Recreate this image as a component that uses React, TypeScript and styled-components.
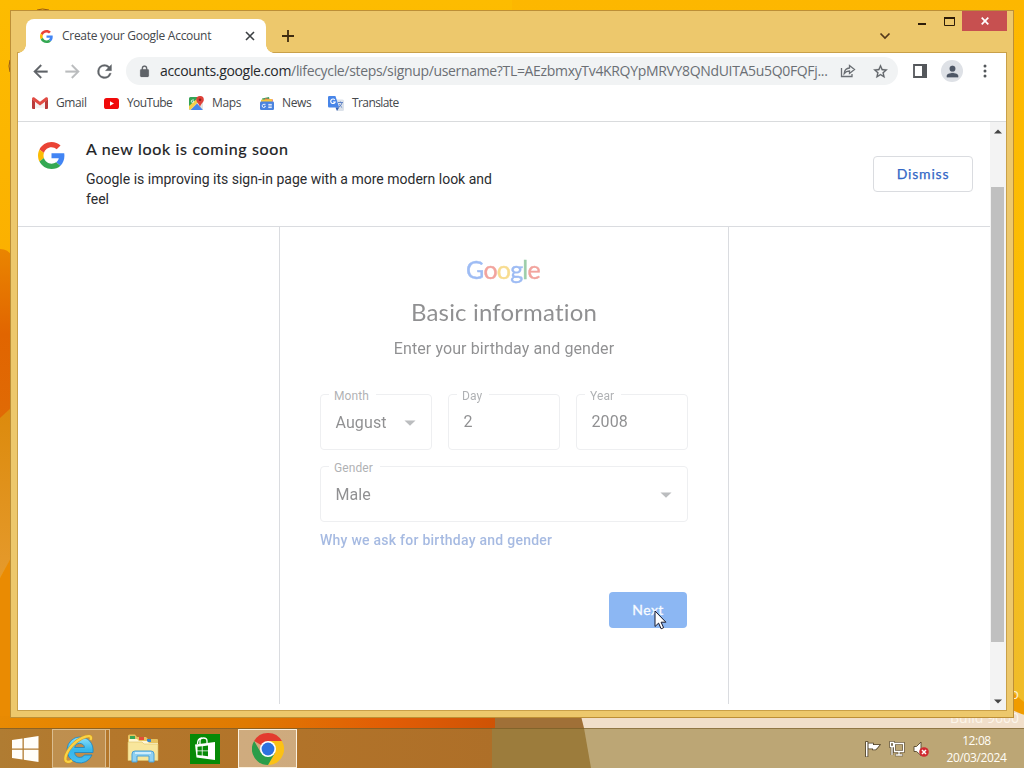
import React from "react";
import styled, { createGlobalStyle } from "styled-components";

const GlobalStyle = createGlobalStyle`
  html, body { margin: 0; padding: 0; }
  body { width: 1024px; height: 768px; overflow: hidden; }
  * { box-sizing: border-box; }
  svg { display: block; flex: none; }
`;

const uiFont = `"Open Sans", "Noto Sans", sans-serif`;

const Desktop = styled.div`
  position: relative;
  display: flex;
  flex-direction: column;
  justify-content: flex-end;
  width: 1024px;
  height: 768px;
  overflow: hidden;
  background: #fcb900;
  font-family: ${uiFont};
`;

const Wallpaper = styled.svg`
  position: absolute;
  inset: 0;
`;

const Watermark = styled.div`
  position: absolute;
  right: 5px;
  top: 685px;
  text-align: right;
  font-size: 14px;
  line-height: 18px;
  color: #fffaf0;
  opacity: 0.85;
`;

const WatermarkLine = styled.div<{ $gap?: number }>`
  height: ${(p) => p.$gap ?? 18}px;
  white-space: nowrap;
`;

const Window = styled.div`
  position: absolute;
  left: 10px;
  top: 10px;
  width: 1004px;
  height: 708px;
  display: flex;
  flex-direction: column;
  padding: 0 7px 7px;
  background: #edc86c;
  border: 1px solid #bd8f36;
`;

const TitleBar = styled.div`
  display: flex;
  height: 42px;
  padding-left: 8px;
  flex: none;
`;

const Tab = styled.div`
  position: relative;
  display: flex;
  align-items: center;
  width: 240px;
  height: 34px;
  margin-top: 8px;
  padding: 0 10px 0 14px;
  background: #fff;
  border-radius: 8px 8px 0 0;
  &::before, &::after {
    content: "";
    position: absolute;
    bottom: 0;
    width: 8px;
    height: 8px;
  }
  &::before { left: -8px; background: radial-gradient(circle at 0 0, transparent 7.5px, #fff 8px); }
  &::after { right: -8px; background: radial-gradient(circle at 100% 0, transparent 7.5px, #fff 8px); }
`;

const TabTitle = styled.span`
  flex: 1;
  margin-left: 9px;
  padding-bottom: 1px;
  font-size: 12px;
  letter-spacing: -0.28px;
  color: #45484c;
  white-space: nowrap;
`;

const NewTab = styled.div`
  display: flex;
  align-items: center;
  height: 34px;
  margin: 8px 0 0 16px;
`;

const TabSearch = styled.div`
  display: flex;
  align-items: center;
  height: 34px;
  margin: 8px 17px 0 auto;
`;

const Controls = styled.div`
  display: flex;
  height: 20px;
  flex: none;
  margin-right: -1px;
`;

const Control = styled.div<{ $width: number; $close?: boolean }>`
  display: flex;
  align-items: center;
  justify-content: center;
  width: ${(p) => p.$width}px;
  height: 20px;
  background: ${(p) => (p.$close ? "#c75050" : "transparent")};
`;

const Browser = styled.div`
  display: flex;
  flex-direction: column;
  flex: 1;
  min-height: 0;
  background: #fff;
  outline: 1px solid #c9a049;
`;

const Toolbar = styled.div`
  display: flex;
  align-items: center;
  height: 36px;
  padding-left: 12px;
  margin-bottom: 1px;
  flex: none;
`;

const ToolButton = styled.div<{ $width: number }>`
  display: flex;
  flex: none;
  align-items: center;
  justify-content: center;
  width: ${(p) => p.$width}px;
`;

const AddressBar = styled.div`
  display: flex;
  flex: none;
  align-items: center;
  width: 772px;
  height: 28px;
  padding-left: 12px;
  border-radius: 14px;
  background: #f1f3f4;
`;

const Url = styled.div`
  flex: 1;
  margin-left: 9px;
  padding-bottom: 1px;
  font-size: 14px;
  letter-spacing: -0.33px;
  color: #6b6f74;
  white-space: nowrap;
  b { font-weight: 400; color: #26282b; }
`;

const Avatar = styled.div`
  display: flex;
  flex: none;
  align-items: center;
  justify-content: center;
  width: 22px;
  height: 22px;
  border-radius: 50%;
  background: #dee1e6;
`;

const Bookmarks = styled.div`
  display: flex;
  align-items: center;
  height: 32px;
  padding: 0 0 5px 14px;
  border-bottom: 1px solid #d9dbdd;
  flex: none;
`;

const Bookmark = styled.div<{ $width: number }>`
  display: flex;
  align-items: center;
  gap: 8px;
  width: ${(p) => p.$width}px;
  height: 26px;
  font-size: 12px;
  letter-spacing: -0.25px;
  color: #45484c;
  white-space: nowrap;
`;

const BookmarkName = styled.span<{ $spacing: number }>`
  padding-bottom: 1px;
  letter-spacing: ${(p) => p.$spacing}px;
`;

const Viewport = styled.div`
  display: flex;
  flex: 1;
  min-height: 0;
`;

const Page = styled.div`
  display: flex;
  flex-direction: column;
  width: 972px;
  font-family: Roboto, sans-serif;
`;

const Banner = styled.div`
  display: flex;
  height: 105px;
  padding: 17px 17px 0 20px;
  border-bottom: 1px solid #dadce0;
`;

const BannerIcon = styled.div`
  width: 48px;
  padding-top: 3px;
`;

const BannerText = styled.div`
  width: 430px;
`;

const BannerTitle = styled.div`
  font-family: Lato, sans-serif;
  font-size: 16px;
  line-height: 20px;
  letter-spacing: 0.67px;
  color: #202124;
  -webkit-text-stroke: 0.2px #202124;
`;

const BannerBody = styled.div`
  margin-top: 10px;
  font-size: 14px;
  line-height: 20px;
  color: #2b2c2f;
`;

const Dismiss = styled.div`
  display: flex;
  align-items: center;
  justify-content: center;
  width: 100px;
  height: 36px;
  margin: 17px 0 0 auto;
  padding-bottom: 2px;
  border: 1px solid #dadce0;
  border-radius: 4px;
  font-family: Lato, sans-serif;
  font-size: 14px;
  letter-spacing: 0.8px;
  color: #3367c6;
  -webkit-text-stroke: 0.25px #3367c6;
`;

const Card = styled.div`
  width: 450px;
  height: 477px;
  margin-left: 261px;
  padding: 26px 40px 0;
  border: solid #dadce0;
  border-width: 0 1px;
`;

const Faded = styled.div`
  opacity: 0.5;
`;

const Logo = styled.div`
  height: 32px;
  padding-right: 2px;
  text-align: center;
  font-family: Lato, sans-serif;
  font-size: 25px;
  line-height: 32px;
  letter-spacing: -0.8px;
`;

const LogoLetter = styled.span<{ $color: string }>`
  color: ${(p) => p.$color};
  -webkit-text-stroke: 0.4px ${(p) => p.$color};
`;

const Heading = styled.div`
  margin-top: 11px;
  text-align: center;
  font-family: Lato, sans-serif;
  font-size: 24px;
  line-height: 32px;
  letter-spacing: 0.16px;
  color: #202124;
`;

const SubHeading = styled.div`
  margin-top: 9px;
  text-align: center;
  font-size: 16px;
  line-height: 24px;
  letter-spacing: 0.1px;
  color: #202124;
`;

const FieldRow = styled.div`
  display: flex;
  gap: 16px;
  margin: 33px 0 16px;
`;

const FieldBox = styled.div<{ $wide?: boolean }>`
  position: relative;
  display: flex;
  align-items: center;
  justify-content: space-between;
  width: ${(p) => (p.$wide ? 368 : 112)}px;
  height: 56px;
  padding: 1px 15px 0 14.5px;
  border: 1px solid #dcdee2;
  border-radius: 4px;
  font-size: 16px;
  letter-spacing: 0.1px;
  color: #202124;
`;

const FieldLabel = styled.span`
  position: absolute;
  left: 8px;
  top: -6px;
  padding: 0 7px 0 5px;
  background: #fff;
  font-size: 12px;
  line-height: 14px;
  letter-spacing: 0.1px;
  color: #5f6368;
`;

const FieldValue = styled.span<{ $raised?: boolean }>`
  margin-bottom: ${(p) => (p.$raised ? 2 : 0)}px;
`;

const HelpLink = styled.div`
  margin-top: 8px;
  font-size: 14px;
  font-weight: 500;
  line-height: 20px;
  letter-spacing: 0.25px;
  color: #4c75c4;
`;

const Actions = styled.div`
  position: relative;
  display: flex;
  justify-content: flex-end;
  margin-top: 42px;
  padding-right: 1px;
`;

const NextButton = styled.div`
  display: flex;
  align-items: center;
  justify-content: center;
  width: 78px;
  height: 36px;
  padding-bottom: 1px;
  border-radius: 4px;
  background: #8cb7f3;
  font-family: Lato, sans-serif;
  font-size: 14px;
  letter-spacing: 0.45px;
  color: #f8fbff;
  -webkit-text-stroke: 0.3px #f8fbff;
`;

const Cursor = styled.svg`
  position: absolute;
  left: 334px;
  top: 18px;
`;

const ScrollTrack = styled.div`
  display: flex;
  flex-direction: column;
  align-items: center;
  width: 16px;
  background: #f3f3f3;
`;

const ScrollArrow = styled.div`
  display: flex;
  align-items: center;
  justify-content: center;
  height: 18px;
`;

const ScrollThumb = styled.div`
  width: 13px;
  height: 455px;
  margin: 47px 2px auto 1px;
  background: #c0c0c0;
`;

const Taskbar = styled.div`
  position: relative;
  display: flex;
  height: 40px;
  border-top: 1px solid rgba(110, 80, 30, 0.55);
`;

const TaskItem = styled.div<{ $width: number; $state?: "open" | "active"; $left?: number }>`
  display: flex;
  align-items: center;
  justify-content: center;
  width: ${(p) => p.$width}px;
  height: 39px;
  margin-left: ${(p) => p.$left ?? 0}px;
  border: ${(p) =>
    p.$state === "active" ? "1px solid #fbf1df" : p.$state === "open" ? "1px solid #dabd90" : "0"};
  background: ${(p) =>
    p.$state === "active" ? "rgba(235,225,210,0.5)" : p.$state === "open" ? "rgba(220,195,155,0.3)" : "transparent"};
`;

const StackEdge = styled.div`
  width: 4px;
  height: 39px;
  border: 1px solid #dabd90;
  border-left: 0;
`;

const Tray = styled.div`
  display: flex;
  align-items: center;
  gap: 8px;
  margin: 0 1px 0 auto;
  padding-top: 1px;
`;

const Clock = styled.div`
  width: 94px;
  padding: 3px 1px 0 0;
  text-align: center;
  font-size: 12px;
  line-height: 17px;
  letter-spacing: -0.38px;
  color: #fffdf6;
`;

const GoogleG = ({ size }: { size: number }) => (
  <svg width={size} height={size} viewBox="0 0 48 48">
    <path fill="#EA4335" d="M24 9.5c3.54 0 6.71 1.22 9.21 3.6l6.85-6.85C35.9 2.38 30.47 0 24 0 14.62 0 6.51 5.38 2.56 13.22l7.98 6.19C12.43 13.72 17.74 9.5 24 9.5z" />
    <path fill="#4285F4" d="M46.98 24.55c0-1.57-.15-3.09-.38-4.55H24v9.02h12.94c-.58 2.96-2.26 5.48-4.78 7.18l7.73 6c4.51-4.18 7.09-10.36 7.09-17.65z" />
    <path fill="#FBBC05" d="M10.53 28.59c-.48-1.45-.76-2.99-.76-4.59s.27-3.14.76-4.59l-7.98-6.19C.92 16.46 0 20.12 0 24c0 3.88.92 7.54 2.56 10.78l7.97-6.19z" />
    <path fill="#34A853" d="M24 48c6.48 0 11.93-2.13 15.89-5.81l-7.73-6c-2.15 1.45-4.92 2.3-8.16 2.3-6.26 0-11.57-4.22-13.47-9.91l-7.98 6.19C6.51 42.62 14.62 48 24 48z" />
  </svg>
);

const MaterialIcon = ({ d, size, color = "#5f6368" }: { d: string; size: number; color?: string }) => (
  <svg width={size} height={size} viewBox="0 0 24 24" fill={color}>
    <path d={d} stroke={color} strokeWidth=".35" />
  </svg>
);

const Caret = () => (
  <svg width="12" height="6" viewBox="0 0 12 6">
    <path d="M0.5 0.5h11L6 5.8z" fill="#777a7e" />
  </svg>
);

const GmailIcon = () => (
  <svg width="16" height="12" viewBox="0 0 16 12">
    <path d="M0 2v9a1 1 0 0 0 1 1h2V4.5z" fill="#b93a3a" />
    <path d="M16 2v9a1 1 0 0 1-1 1h-2V4.5z" fill="#b93a3a" />
    <path d="M3 4v7h10V4L8 8z" fill="#f5f2f2" />
    <path d="M0 2C0 .4 1.4-.3 2.7.7L8 4.8 13.3.7C14.6-.3 16 .4 16 2v.6L8 8.6 0 2.6z" fill="#e14b43" />
  </svg>
);

const YouTubeIcon = () => (
  <svg width="15" height="11" viewBox="0 0 15 11">
    <rect width="15" height="11" rx="2.6" fill="#f00a0a" />
    <path d="M6 3.2v4.6l4-2.3z" fill="#fff" />
  </svg>
);

const MapsIcon = () => (
  <svg width="15" height="15" viewBox="0 0 15 15">
    <rect y="1" width="14" height="13" rx="1.5" fill="#e4e5e2" />
    <path d="M0 2.5A1.5 1.5 0 0 1 1.5 1H9l1 4-9.5 8.6L0 13z" fill="#35a456" />
    <path d="M1.5 14 8 7.6 14 14z" fill="#4a86e8" />
    <path d="m0 10 8.3-7.5 2.2 2L1.2 14 0 13z" fill="#f7cf48" />
    <path d="M11 0a3.7 3.7 0 0 0-3.7 3.7C7.3 6.2 10 7.5 11 11c1-3.5 3.8-4.8 3.8-7.3A3.7 3.7 0 0 0 11 0z" fill="#df4038" />
    <circle cx="11" cy="3.7" r="1.3" fill="#8c231e" />
    <path d="M5 4H3.7a1.3 1.3 0 1 0 1.2 1.4H3.8" fill="none" stroke="#fff" strokeWidth=".8" />
  </svg>
);

const NewsIcon = () => (
  <svg width="14" height="13" viewBox="0 0 14 13">
    <path d="M2 1.5 9 0l1 5H3z" fill="#43a25d" />
    <path d="m5 1.2 8 1.2-.6 3H5z" fill="#e76156" />
    <path d="m1 2.8 11-.8v4H1z" fill="#f4c440" />
    <rect y="4.5" width="14" height="8.5" rx="1.2" fill="#4a83df" />
    <path d="M5.5 7.3H4a1.6 1.6 0 1 0 1.4 1.9H4.3M8.3 7.4h3.5M8.3 9h3.5M8.3 10.6h3.5" fill="none" stroke="#fff" strokeWidth=".9" />
  </svg>
);

const TranslateIcon = () => (
  <svg width="16" height="15" viewBox="0 0 16 15">
    <path d="M6 3.5h8.5A1.5 1.5 0 0 1 16 5v8.5a1.5 1.5 0 0 1-1.5 1.5H9z" fill="#dce2ea" />
    <path d="M1.2 0h6.2l3.8 11.5H1.2A1.2 1.2 0 0 1 0 10.3V1.2A1.2 1.2 0 0 1 1.2 0z" fill="#4885e8" />
    <path d="m7.5 11.5h3.7L9 15z" fill="#315fb4" />
    <path d="M6.8 3.8A2.3 2.3 0 1 0 7.2 6H5" fill="none" stroke="#fff" strokeWidth="1.1" />
    <path d="M10 6.5h5M12.4 5.5v1M14 6.5c-.4 2-1.6 3.5-3 4.5M11.4 8.2c.6 1.4 1.6 2.6 2.8 3.4" fill="none" stroke="#567cc2" strokeWidth=".9" />
  </svg>
);

const WindowsIcon = () => (
  <svg width="28" height="26" viewBox="0 0 28 26">
    <path d="M1 4 11.5 2.4v10H1zM12.8 2.2 27.5 0v12.4H12.8zM1 13.7h10.5v9.8L1 22zM12.8 13.7h14.7V26l-14.7-2.2z" fill="#fffefa" />
  </svg>
);

const ExplorerIcon = () => (
  <svg width="34" height="34" viewBox="0 0 34 34">
    <defs>
      <linearGradient id="ie" x1="0" y1="0" x2="0" y2="1">
        <stop offset="0" stopColor="#8de0fb" />
        <stop offset=".5" stopColor="#35b6ea" />
        <stop offset="1" stopColor="#49bff0" />
      </linearGradient>
    </defs>
    <path d="M17.5 5A13 13 0 1 0 30 23H22.4C20.5 26.5 13 26.5 12.6 20.5H31C32 11 26 5 17.5 5zM12.7 15.5C13.3 10 22 10 22.5 15.5z" fill="url(#ie)" stroke="#1a84c0" strokeWidth=".8" />
    <path d="M28.500 8C30.500 3.500 26.500 3 20 6 10 11 2.500 22 3.500 28 4 30.500 7 30.500 10 28.500" fill="none" stroke="#d79b1b" strokeWidth="3.200" />
    <path d="M28.500 8C30.500 3.500 26.500 3 20 6 10 11 2.500 22 3.500 28 4 30.500 7 30.500 10 28.500" fill="none" stroke="#fad246" strokeWidth="2.300" />
  </svg>
);

const FolderIcon = () => (
  <svg width="32" height="29" viewBox="0 0 32 29">
    <path d="M1 2q0-1.5 1.5-1.5H8L10 3h9l2 2h9q1 0 1 1v20H1z" fill="#e6c25f" />
    <path d="M3 2h5v3H3z" fill="#38a653" />
    <path d="M12 3h5v3h-5z" fill="#e44d38" />
    <path d="M20 5h4v3h-4z" fill="#3887cb" />
    <path d="M2 5h8l2 2h8l2 2h9v3H2z" fill="#fff7d2" />
    <path d="M1 8h14l2 2h14v16.5H1z" fill="#f8e69c" stroke="#dcc066" strokeWidth=".6" />
    <path d="M5 28V20q0-3 3-3h16q3 0 3 3v8h-5v-6H10v6z" fill="#8fd0f2" stroke="#4aa0d5" />
    <path d="M8 19h16" stroke="#e5f7ff" strokeWidth="1.5" />
  </svg>
);

const StoreIcon = () => (
  <svg width="30" height="30" viewBox="0 0 30 30">
    <rect width="30" height="30" fill="#078a07" />
    <path d="M5 10.500 25 8v18L6.500 23.500z" fill="#fff" />
    <path d="M10 10V7q0-3 3.500-3T17 7v2M7.500 10q0-5.500 4-6" fill="none" stroke="#fff" strokeWidth="1.300" />
    <path d="m7.500 12.800 4.300-.5v4.200H7.500zM12.600 12.200l5.400-.7v5h-5.400zM7.500 17.300h4.300v4.200l-4.300-.5zM12.600 17.300H18v5l-5.400-.7z" fill="#078a07" />
  </svg>
);

const ChromeIcon = () => (
  <svg width="32" height="32" viewBox="0 0 32 32">
    <path d="M16 16 2.140 8A16 16 0 0 1 29.860 8z" fill="#e33b2e" />
    <path d="M16 8h13.860A16 16 0 0 1 16 32l6.930-12z" fill="#fbc116" />
    <path d="M9.070 20 2.140 8A16 16 0 0 0 16 32l6.930-12z" fill="#2a9d49" />
    <circle cx="16" cy="16" r="8" fill="#fff" />
    <circle cx="16" cy="16" r="6.400" fill="#2d72df" />
  </svg>
);

const FlagIcon = () => (
  <svg width="16" height="16" viewBox="0 0 16 16">
    <path d="M1 1h1.500v14.500H1zM3.500 2.500H8V4h6.500l-2.200 2.700L10.500 8.500H8V7.500H3.500z" fill="#fff" stroke="#4c3f28" strokeWidth="1.600" paintOrder="stroke" />
  </svg>
);

const NetworkIcon = () => (
  <svg width="16" height="16" viewBox="0 0 16 16" fill="none">
    <path d="M5.500 2.500h9v8h-9zM10 10.500v3M6 14h8M1.500 1.500h3v4h-3zM3 5.500V14" stroke="#55462b" strokeWidth="2.600" />
    <path d="M5.500 2.500h9v8h-9zM10 10.500v3M6.500 14h7M1.500 1.500h3v4h-3zM3 5.500V14" stroke="#fff" strokeWidth="1.300" />
  </svg>
);

const SpeakerIcon = () => (
  <svg width="16" height="16" viewBox="0 0 16 16">
    <path d="M1 5.500h2.500L8 1v13.500L3.500 10.500H1z" fill="#fff" stroke="#55462b" strokeWidth=".9" />
    <circle cx="11" cy="11" r="4.800" fill="#d02a30" />
    <path d="m9 9 4 4m0-4-4 4" stroke="#fff" strokeWidth="1.500" />
  </svg>
);

type FieldProps = { label: string; value: string; select?: boolean; wide?: boolean };

const Field = ({ label, value, select, wide }: FieldProps) => (
  <FieldBox $wide={wide}>
    <FieldLabel>{label}</FieldLabel>
    <FieldValue $raised={!select}>{value}</FieldValue>
    {select && <Caret />}
  </FieldBox>
);

const logoLetters: [string, string][] = [
  ["G", "#3c78e8"],
  ["o", "#e5483c"],
  ["o", "#f0b920"],
  ["g", "#3c78e8"],
  ["l", "#3a9c55"],
  ["e", "#e5483c"],
];

const bookmarks = [
  { name: "Gmail", width: 72, spacing: -0.4, icon: <GmailIcon /> },
  { name: "YouTube", width: 85, spacing: -0.6, icon: <YouTubeIcon /> },
  { name: "Maps", width: 71, spacing: -0.35, icon: <MapsIcon /> },
  { name: "News", width: 68, spacing: -0.35, icon: <NewsIcon /> },
  { name: "Translate", width: 76, spacing: -0.6, icon: <TranslateIcon /> },
];

export default function App() {
  return (
    <Desktop>
      <GlobalStyle />
      <Wallpaper width="1024" height="768" viewBox="0 0 1024 768">
        <defs>
          <linearGradient id="sky" x1="0" y1="0" x2="0" y2="1">
            <stop offset="0" stopColor="#fdbc00" />
            <stop offset=".4" stopColor="#fbae00" />
            <stop offset="1" stopColor="#f0b420" />
          </linearGradient>
          <linearGradient id="east" x1="0" y1="0" x2="0" y2="1">
            <stop offset="0" stopColor="#fdb700" />
            <stop offset=".4" stopColor="#fbbd05" />
            <stop offset="1" stopColor="#efbc2c" />
          </linearGradient>
          <linearGradient id="petal" x1="0" y1="0" x2="0" y2="1">
            <stop offset="0" stopColor="#ea8500" />
            <stop offset=".5" stopColor="#e16500" />
            <stop offset="1" stopColor="#e06a05" />
          </linearGradient>
          <linearGradient id="stem" x1="0" y1="0" x2="0" y2="1">
            <stop offset="0" stopColor="#dc8a0c" />
            <stop offset="1" stopColor="#e59a2c" />
          </linearGradient>
          <linearGradient id="ground" x1="0" y1="0" x2="1" y2="0">
            <stop offset="0" stopColor="#e88a02" />
            <stop offset=".5" stopColor="#df7a02" />
            <stop offset=".78" stopColor="#e25d05" />
            <stop offset="1" stopColor="#cf5305" />
          </linearGradient>
          <linearGradient id="bar" x1="0" y1="0" x2="1" y2="0">
            <stop offset="0" stopColor="#b07c32" />
            <stop offset=".22" stopColor="#b4772b" />
            <stop offset="1" stopColor="#ae6f28" />
          </linearGradient>
        </defs>
        <rect width="1024" height="768" fill="url(#sky)" />
        <rect x="512" width="512" height="716" fill="url(#east)" />
        <path d="M0 249q9 0 12 8v152L0 420z" fill="url(#petal)" />
        <path d="M0 418l12-11v150L0 578z" fill="url(#stem)" />
        <path d="M0 578l12-22v172H0z" fill="#ea8b02" />
        <path d="M1012 692l12 10v12h-12z" fill="#f09c00" />
        <rect y="716" width="495" height="12" fill="url(#ground)" />
        <rect x="495" y="716" width="92" height="12" fill="#a07037" />
        <path d="M581 716h431v-6l12 5v13H584z" fill="#f1dfca" />
        <rect y="728" width="495" height="40" fill="url(#bar)" />
        <rect x="492" y="728" width="110" height="40" fill="#9c7c3c" />
        <path d="M584 728h440v40H591z" fill="#bca675" />
        <path d="M37 10q5-2 12 0M10 60q-2 6 0 12" stroke="#935818" fill="none" />
      </Wallpaper>
      <Watermark>
        <WatermarkLine $gap={24}>Windows 8.1 Pro</WatermarkLine>
        <WatermarkLine>Build 9600</WatermarkLine>
      </Watermark>

      <Window>
        <TitleBar>
          <Tab>
            <GoogleG size={13} />
            <TabTitle>Create your Google Account</TabTitle>
            <svg width="12" height="12" viewBox="0 0 12 12">
              <path d="m2 2 8 8m0-8-8 8" stroke="#3c4043" strokeWidth="1.600" />
            </svg>
          </Tab>
          <NewTab>
            <svg width="12" height="12" viewBox="0 0 12 12">
              <path d="M6 0v12M0 6h12" stroke="#3f2c10" strokeWidth="1.800" />
            </svg>
          </NewTab>
          <TabSearch>
            <svg width="12" height="12" viewBox="0 0 12 12">
              <path d="m1.500 3.500 4.500 4.500 4.500-4.500" fill="none" stroke="#54391a" strokeWidth="1.700" />
            </svg>
          </TabSearch>
          <Controls>
            <Control $width={28}>
              <svg width="10" height="10" viewBox="0 0 10 10">
                <path d="M1 8h8" stroke="#2d1c08" strokeWidth="2" />
              </svg>
            </Control>
            <Control $width={26}>
              <svg width="11" height="9" viewBox="0 0 11 9">
                <path d="M.5 1h10v7.500H.5z" fill="none" stroke="#2d1c08" />
                <path d="M0 1h11" stroke="#2d1c08" strokeWidth="2" />
              </svg>
            </Control>
            <Control $width={45} $close>
              <svg width="8" height="8" viewBox="0 0 8 8">
                <path d="m.7.7 6.600 6.600m0-6.600L.7 7.300" stroke="#fff" strokeWidth="1.700" />
              </svg>
            </Control>
          </Controls>
        </TitleBar>

        <Browser>
          <Toolbar>
            <ToolButton $width={20}>
              <MaterialIcon size={21} d="M20 11H7.830l5.590-5.590L12 4l-8 8 8 8 1.410-1.410L7.830 13H20v-2z" />
            </ToolButton>
            <ToolButton $width={44}>
              <MaterialIcon size={21} color="#babcbe" d="m12 4-1.410 1.410L16.170 11H4v2h12.170l-5.580 5.590L12 20l8-8z" />
            </ToolButton>
            <ToolButton $width={20}>
              <MaterialIcon size={21} d="M17.650 6.350A7.960 7.960 0 0 0 12 4a8 8 0 1 0 7.730 10h-2.080A6 6 0 1 1 12 6c1.660 0 3.140.690 4.220 1.780L13 11h7V4z" />
            </ToolButton>
            <ToolButton $width={12} />
            <AddressBar>
              <MaterialIcon size={13} d="M18 8h-1V6A5 5 0 0 0 7 6v2H6a2 2 0 0 0-2 2v10c0 1.100.9 2 2 2h12a2 2 0 0 0 2-2V10a2 2 0 0 0-2-2zM9 6a3 3 0 0 1 6 0v2H9z" />
              <Url>
                <b>accounts.google.com</b>/lifecycle/steps/signup/username?TL=AEzbmxyTv4KRQYpMRVY8QNdUITA5u5Q0FQFj...
              </Url>
              <ToolButton $width={28}>
                <svg width="16" height="16" viewBox="0 0 16 16" fill="none" stroke="#6a6e73" strokeWidth="1.300">
                  <path d="M1.500 5v8.500h10.500V11" />
                  <path d="M9.500 2.500 14.500 6.500l-5 4V8C7 8 5.500 8.800 4.200 10.500 4.500 7.500 6.500 5.200 9.500 5z" />
                </svg>
              </ToolButton>
              <ToolButton $width={36}>
                <MaterialIcon size={17} d="m22 9.240-7.190-.62L12 2 9.190 8.630 2 9.240l5.460 4.730L5.820 21 12 17.270 18.180 21l-1.630-7.030zM12 15.400l-3.760 2.270 1-4.280-3.320-2.880 4.380-.38L12 6.100l1.710 4.040 4.380.38-3.320 2.880 1 4.280z" />
              </ToolButton>
            </AddressBar>
            <ToolButton $width={43}>
              <svg width="14" height="14" viewBox="0 0 14 14">
                <path d="M1 1h12v12H1z" fill="none" stroke="#54575b" strokeWidth="1.800" />
                <path d="M9 0h5v14H9z" fill="#54575b" />
              </svg>
            </ToolButton>
            <Avatar>
              <MaterialIcon size={17} color="#4e5766" d="M12 12a4 4 0 1 0 0-8 4 4 0 0 0 0 8zm0 2c-2.670 0-8 1.340-8 4v2h16v-2c0-2.660-5.330-4-8-4z" />
            </Avatar>
            <ToolButton $width={43}>
              <svg width="4" height="14" viewBox="0 0 4 14" fill="#53575b">
                <circle cx="2" cy="2" r="1.500" />
                <circle cx="2" cy="7" r="1.500" />
                <circle cx="2" cy="12" r="1.500" />
              </svg>
            </ToolButton>
          </Toolbar>

          <Bookmarks>
            {bookmarks.map((b) => (
              <Bookmark key={b.name} $width={b.width}>
                {b.icon}
                <BookmarkName $spacing={b.spacing}>{b.name}</BookmarkName>
              </Bookmark>
            ))}
          </Bookmarks>

          <Viewport>
            <Page>
              <Banner>
                <BannerIcon>
                  <GoogleG size={27} />
                </BannerIcon>
                <BannerText>
                  <BannerTitle>A new look is coming soon</BannerTitle>
                  <BannerBody>Google is improving its sign-in page with a more modern look and feel</BannerBody>
                </BannerText>
                <Dismiss>Dismiss</Dismiss>
              </Banner>
              <Card>
                <Faded>
                  <Logo>
                    {logoLetters.map(([letter, color], i) => (
                      <LogoLetter key={i} $color={color}>
                        {letter}
                      </LogoLetter>
                    ))}
                  </Logo>
                  <Heading>Basic information</Heading>
                  <SubHeading>Enter your birthday and gender</SubHeading>
                  <FieldRow>
                    <Field label="Month" value="August" select />
                    <Field label="Day" value="2" />
                    <Field label="Year" value="2008" />
                  </FieldRow>
                  <Field label="Gender" value="Male" select wide />
                  <HelpLink>Why we ask for birthday and gender</HelpLink>
                </Faded>
                <Actions>
                  <NextButton>Next</NextButton>
                  <Cursor width="13" height="20" viewBox="0 0 13 20">
                    <path d="M1 1v15.500l3.600-3.400 2.500 5.700 2.500-1.100-2.500-5.500h4.800z" fill="#fff" stroke="#15182c" />
                  </Cursor>
                </Actions>
              </Card>
            </Page>
            <ScrollTrack>
              <ScrollArrow>
                <svg width="8" height="5" viewBox="0 0 8 5">
                  <path d="M0 4.500 4 .5l4 4z" fill="#444" />
                </svg>
              </ScrollArrow>
              <ScrollThumb />
              <ScrollArrow>
                <svg width="8" height="5" viewBox="0 0 8 5">
                  <path d="M0 .5 4 4.500l4-4z" fill="#444" />
                </svg>
              </ScrollArrow>
            </ScrollTrack>
          </Viewport>
        </Browser>
      </Window>

      <Taskbar>
        <TaskItem $width={50}>
          <WindowsIcon />
        </TaskItem>
        <TaskItem $width={54} $left={2} $state="open">
          <ExplorerIcon />
        </TaskItem>
        <StackEdge />
        <TaskItem $width={60} $left={3}>
          <FolderIcon />
        </TaskItem>
        <TaskItem $width={60} $left={2}>
          <StoreIcon />
        </TaskItem>
        <TaskItem $width={59} $left={3} $state="active">
          <ChromeIcon />
        </TaskItem>
        <Tray>
          <FlagIcon />
          <NetworkIcon />
          <SpeakerIcon />
        </Tray>
        <Clock>
          12:08
          <br />
          20/03/2024
        </Clock>
      </Taskbar>
    </Desktop>
  );
}
